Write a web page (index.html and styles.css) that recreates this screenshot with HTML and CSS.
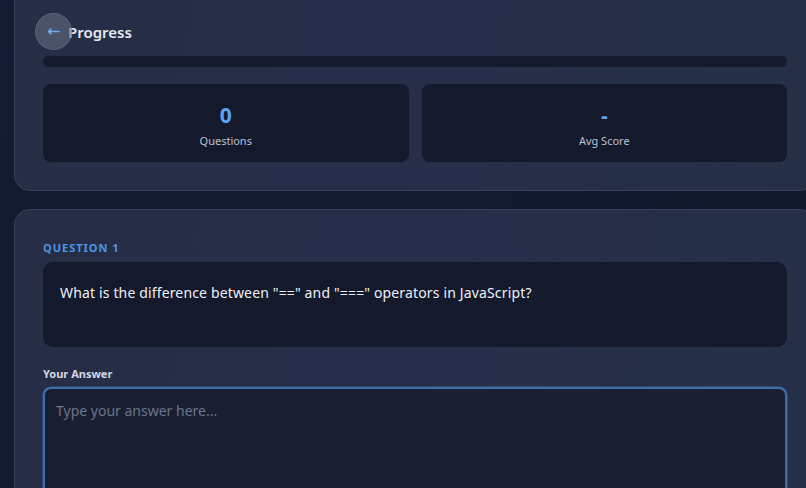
FILE: index.html
```html
<!DOCTYPE html>
<html>

<head>
    <meta charset="UTF-8">
    <meta name="viewport" content="width=device-width, initial-scale=1.0">
    <title>Interview Practice</title>
    <link rel="stylesheet" href="styles.css">
</head>

<body>
    <div class="page">
        <!-- Progress summary -->
        <section class="card progress-card">
            <div class="card-header">
                <button class="back-button" aria-label="Back">
                    <svg width="13" height="8" viewBox="0 0 13 8">
                        <path d="M12 4.5H2M4 2.2L1.5 4.5 4 6.8" fill="none" stroke="#6fb0f5" stroke-width="1.6" stroke-linecap="round" stroke-linejoin="round"/>
                    </svg>
                </button>
                <h2 class="card-title">Progress</h2>
            </div>
            <div class="progress-track">
                <div class="progress-fill" style="width: 0%"></div>
            </div>
            <div class="stats">
                <div class="stat">
                    <div class="stat-value">0</div>
                    <div class="stat-label">Questions</div>
                </div>
                <div class="stat">
                    <div class="stat-value">-</div>
                    <div class="stat-label">Avg Score</div>
                </div>
            </div>
        </section>

        <!-- Current question -->
        <section class="card question-card">
            <div class="question-number">Question 1</div>
            <div class="question-box">
                What is the difference between "==" and "===" operators in JavaScript?
            </div>
            <label class="answer-label" for="answer">Your Answer</label>
            <textarea id="answer" class="answer-input" placeholder="Type your answer here..." autofocus></textarea>
        </section>
    </div>
</body>

</html>
```

FILE: styles.css
```css
* {
    margin: 0;
    padding: 0;
    box-sizing: border-box;
    font-family: "Noto Sans", "Open Sans", sans-serif;
}

body {
    background: linear-gradient(135deg, #141c33 0%, #111829 100%);
    color: #e6eaf3;
    overflow: hidden;
    height: 100vh;
}

.page {
    width: 816px;
    padding-left: 14px;
    margin-top: -20px;
    display: flex;
    flex-direction: column;
    gap: 18px;
}

.card {
    background: linear-gradient(100deg, #262d45 0%, #272e4a 50%, #253047 100%);
    border: 1px solid #363f58;
    border-radius: 16px;
    padding: 0 28px 28px;
}

/* Progress card */
.progress-card {
    padding-top: 32px;
}

.card-header {
    display: flex;
    align-items: center;
    height: 36px;
}

.back-button {
    width: 37px;
    height: 37px;
    border-radius: 50%;
    margin-left: -8px;
    border: 1px solid rgba(140, 150, 175, 0.25);
    background: rgba(100, 108, 130, 0.6);
    display: flex;
    align-items: center;
    justify-content: center;
    position: relative;
    z-index: 1;
}

.card-title {
    font-size: 15px;
    font-weight: 600;
    color: #e4e8f1;
    margin-left: -4px;
    margin-top: 1px;
}

.progress-track {
    margin-top: 7px;
    height: 11px;
    border-radius: 6px;
    background: #141a2b;
    overflow: hidden;
}

.progress-fill {
    height: 100%;
    background: #4a90e2;
}

.stats {
    margin-top: 17px;
    display: grid;
    grid-template-columns: 1fr 1fr;
    gap: 13px;
}

.stat {
    height: 78px;
    background: #141a2c;
    border-radius: 8px;
    display: flex;
    flex-direction: column;
    align-items: center;
    padding-top: 16px;
}

.stat-value {
    font-size: 21px;
    font-weight: 700;
    line-height: 30px;
    color: #5ea3f2;
}

.stat-label {
    margin-top: 3px;
    font-size: 11px;
    color: #b9c1d2;
}

/* Question card */
.question-card {
    padding-top: 31px;
    height: 320px;
}

.question-number {
    font-size: 11px;
    font-weight: 700;
    letter-spacing: 1px;
    text-transform: uppercase;
    color: #4d95e6;
    line-height: 14px;
}

.question-box {
    margin-top: 7px;
    min-height: 85px;
    background: #141a2c;
    border-radius: 10px;
    padding: 20px 17px;
    font-size: 14px;
    letter-spacing: 0.15px;
    line-height: 22px;
    color: #eef1f7;
}

.answer-label {
    display: block;
    margin-top: 20px;
    font-size: 11px;
    font-weight: 700;
    line-height: 14px;
    color: #d3d9e4;
}

.answer-input {
    display: block;
    width: 100%;
    height: 140px;
    margin-top: 6px;
    resize: none;
    background: #191f31;
    border: 2px solid #3f6ea9;
    border-radius: 8px;
    box-shadow: 0 0 0 1px rgba(74, 144, 226, 0.25);
    padding: 12px 11px;
    font-size: 14px;
    color: #e6eaf3;
    caret-color: #c9d1e0;
    outline: none;
}

.answer-input::placeholder {
    color: #6b7489;
}
```
